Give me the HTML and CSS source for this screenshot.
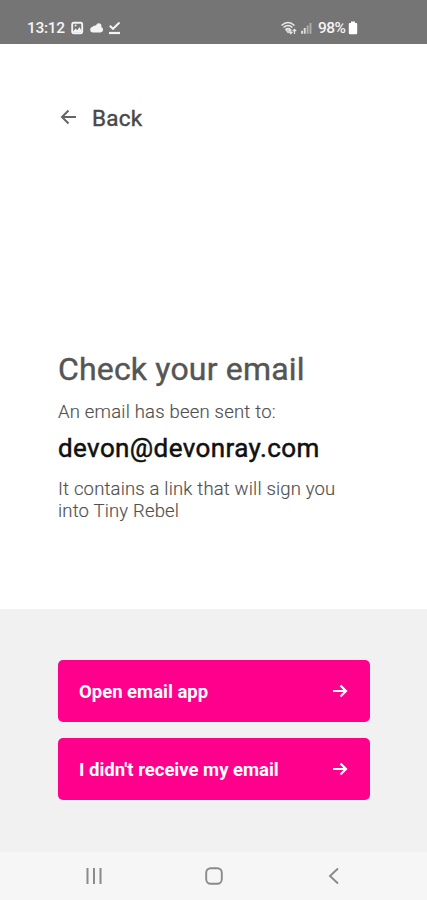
FILE: index.html
```
<!DOCTYPE html>
<html lang="en">
<head>
<meta charset="utf-8">
<title>Check your email</title>
<link rel="stylesheet" href="styles.css">
</head>
<body>
<div class="screen">
  <header class="status">
    <span class="time">13:12</span>
    <svg class="notices" width="52" height="14" viewBox="0 0 52 14" fill="none">
      <rect x="1.200" y="1.800" width="10" height="10.400" rx="1.400" stroke="#f4f4f4" stroke-width="1.900"/>
      <path d="M2 10.500l2.500-3 1.800 1.700 2-3.200 2.500 4v1.500H2z" fill="#f4f4f4"/>
      <circle cx="4.600" cy="4.600" r="1" fill="#f4f4f4"/>
      <path d="M21.500 11.500a2.900 2.900 0 0 1 0-5.700 3.800 3.800 0 0 1 3.500-1.300 3.400 3.400 0 0 1 5.600 1.700 2.800 2.800 0 0 1-1.100 5.300z" fill="#f4f4f4"/>
      <circle cx="27.800" cy="4.800" r="2.600" fill="#f4f4f4"/>
      <path d="M38.800 4.800l3.200 3 6.500-6.300" stroke="#f4f4f4" stroke-width="2"/>
      <path d="M38 12h11" stroke="#f4f4f4" stroke-width="2.200"/>
    </svg>
    <svg class="signal" width="34" height="16" viewBox="0 0 34 16" fill="none">
      <path d="M1.500 5.500Q8-.5 14.500 5.500M3.500 7.500Q8 3.500 12.500 7.500M5.500 9.500Q8 7.500 10.500 9.500" stroke="#e6e6e6" stroke-width="1.600"/>
      <path d="M8 12.500l-2-2.600h4zM10.800 9v4.500m-1.700-1.700l1.700 1.900 1.700-1.900M14.500 14V9.500m-1.700 1.700l1.700-1.900 1.700 1.900" stroke="#e6e6e6" stroke-width="1.200"/>
      <path d="M22 13.700v-3M24.700 13.700V8" stroke="#dedede" stroke-width="1.900"/>
      <path d="M27.600 13.700V5.500M30.500 13.700V3" stroke="#b0b0b0" stroke-width="1.900"/>
    </svg>
    <span class="percent">98%</span>
    <svg class="battery" width="10" height="14" viewBox="0 0 10 14"><path d="M3 .5h4V2h1.200q1 0 1 1v9q0 1.300-1.200 1.300H2Q.8 13.300.8 12V3q0-1 1-1H3z" fill="#fff"/></svg>
  </header>
  <main class="content">
    <a class="back">
      <svg width="18" height="18" viewBox="0 0 18 18" fill="none"><path d="M17 8H3.500M9.500 1.500L3 8l6.500 6.500" stroke="#666" stroke-width="2"/></svg>
      <span>Back</span>
    </a>
    <h1>Check your email</h1>
    <p class="sent">An email has been sent to:</p>
    <p class="address">devon@devonray.com</p>
    <p class="note">It contains a link that will sign you<br>into Tiny Rebel</p>
  </main>
  <section class="actions">
    <button><span>Open email app</span><svg width="16" height="16" viewBox="0 0 16 16" fill="none"><path d="M1 8h12M8.500 2.500L14 8l-5.500 5.500" stroke="#fff" stroke-width="2.200"/></svg></button>
    <button><span>I didn't receive my email</span><svg width="16" height="16" viewBox="0 0 16 16" fill="none"><path d="M1 8h12M8.500 2.500L14 8l-5.500 5.500" stroke="#fff" stroke-width="2.200"/></svg></button>
  </section>
  <nav class="system">
    <svg width="18" height="18" viewBox="0 0 18 18"><path d="M2.500 1v16M9 1v16M15.500 1v16" stroke="#8a8a8a" stroke-width="2"/></svg>
    <svg width="18" height="18" viewBox="0 0 18 18"><rect x="1.200" y="1.200" width="15.600" height="15.600" rx="4.500" fill="none" stroke="#8a8a8a" stroke-width="1.900"/></svg>
    <svg width="18" height="18" viewBox="0 0 18 18"><path d="M13 1.500L5 9l8 7.500" fill="none" stroke="#8a8a8a" stroke-width="1.900"/></svg>
  </nav>
</div>
</body>
</html>
```
FILE: styles.css
```
* { box-sizing: border-box; }
body { margin: 0; font-family: Roboto, sans-serif; background: #fff; }
svg { display: block; flex: none; }
h1, p { margin: 0; white-space: nowrap; }
.screen { width: 427px; height: 900px; display: flex; flex-direction: column; }
.status { height: 44px; flex: none; background: #757575; color: #f4f4f4; display: flex; align-items: center; padding: 11px 69px 0 27px; font-size: 15.5px; font-weight: 500; line-height: 20px; }
.time { width: 43px; letter-spacing: -0.3px; }
.notices { margin-left: 1px; }
.signal { margin-left: auto; }
.percent { margin-left: 4px; width: 29px; letter-spacing: -0.5px; }
.battery { margin-left: 1px; }
.content { height: 565px; flex: none; padding: 58px 58px 0; display: flex; flex-direction: column; }
.back { display: flex; align-items: center; gap: 15px; height: 32px; color: #484848; font-size: 22.5px; font-weight: 400; line-height: 32px; letter-spacing: 0.2px; -webkit-text-stroke: 0.4px #484848; }
.back svg { margin-left: 1px; }
.back span { margin-top: -1px; }
h1 { margin-top: 214px; font-size: 32px; line-height: 42px; font-weight: 400; color: #555; letter-spacing: 0.17px; -webkit-text-stroke: 0.4px #555; }
.sent { margin-top: 11px; font-size: 18.5px; line-height: 22px; font-weight: 300; color: #505050; letter-spacing: 0.2px; -webkit-text-stroke: 0.15px #505050; }
.address { margin-top: 8px; font-size: 26px; line-height: 34px; font-weight: 400; color: #111; letter-spacing: 0.4px; -webkit-text-stroke: 0.5px #111; }
.note { margin-top: 13px; font-size: 18.5px; line-height: 22px; font-weight: 300; color: #505050; letter-spacing: 0.17px; -webkit-text-stroke: 0.15px #505050; }
.actions { height: 243px; flex: none; background: #f1f1f1; padding: 51px 57px 0 58px; display: flex; flex-direction: column; gap: 16px; }
button { height: 62px; border: 0; border-radius: 5px; background: #ff008c; color: #fff; padding: 0 22px 0 21px; display: flex; align-items: center; justify-content: space-between; font: 700 18.5px/24px Roboto, sans-serif; letter-spacing: 0; white-space: nowrap; }
button span { padding-top: 1px; }
.system { flex: 1; background: #f6f6f6; display: flex; justify-content: space-between; align-items: center; padding: 0 84px 0 85px; }
```
